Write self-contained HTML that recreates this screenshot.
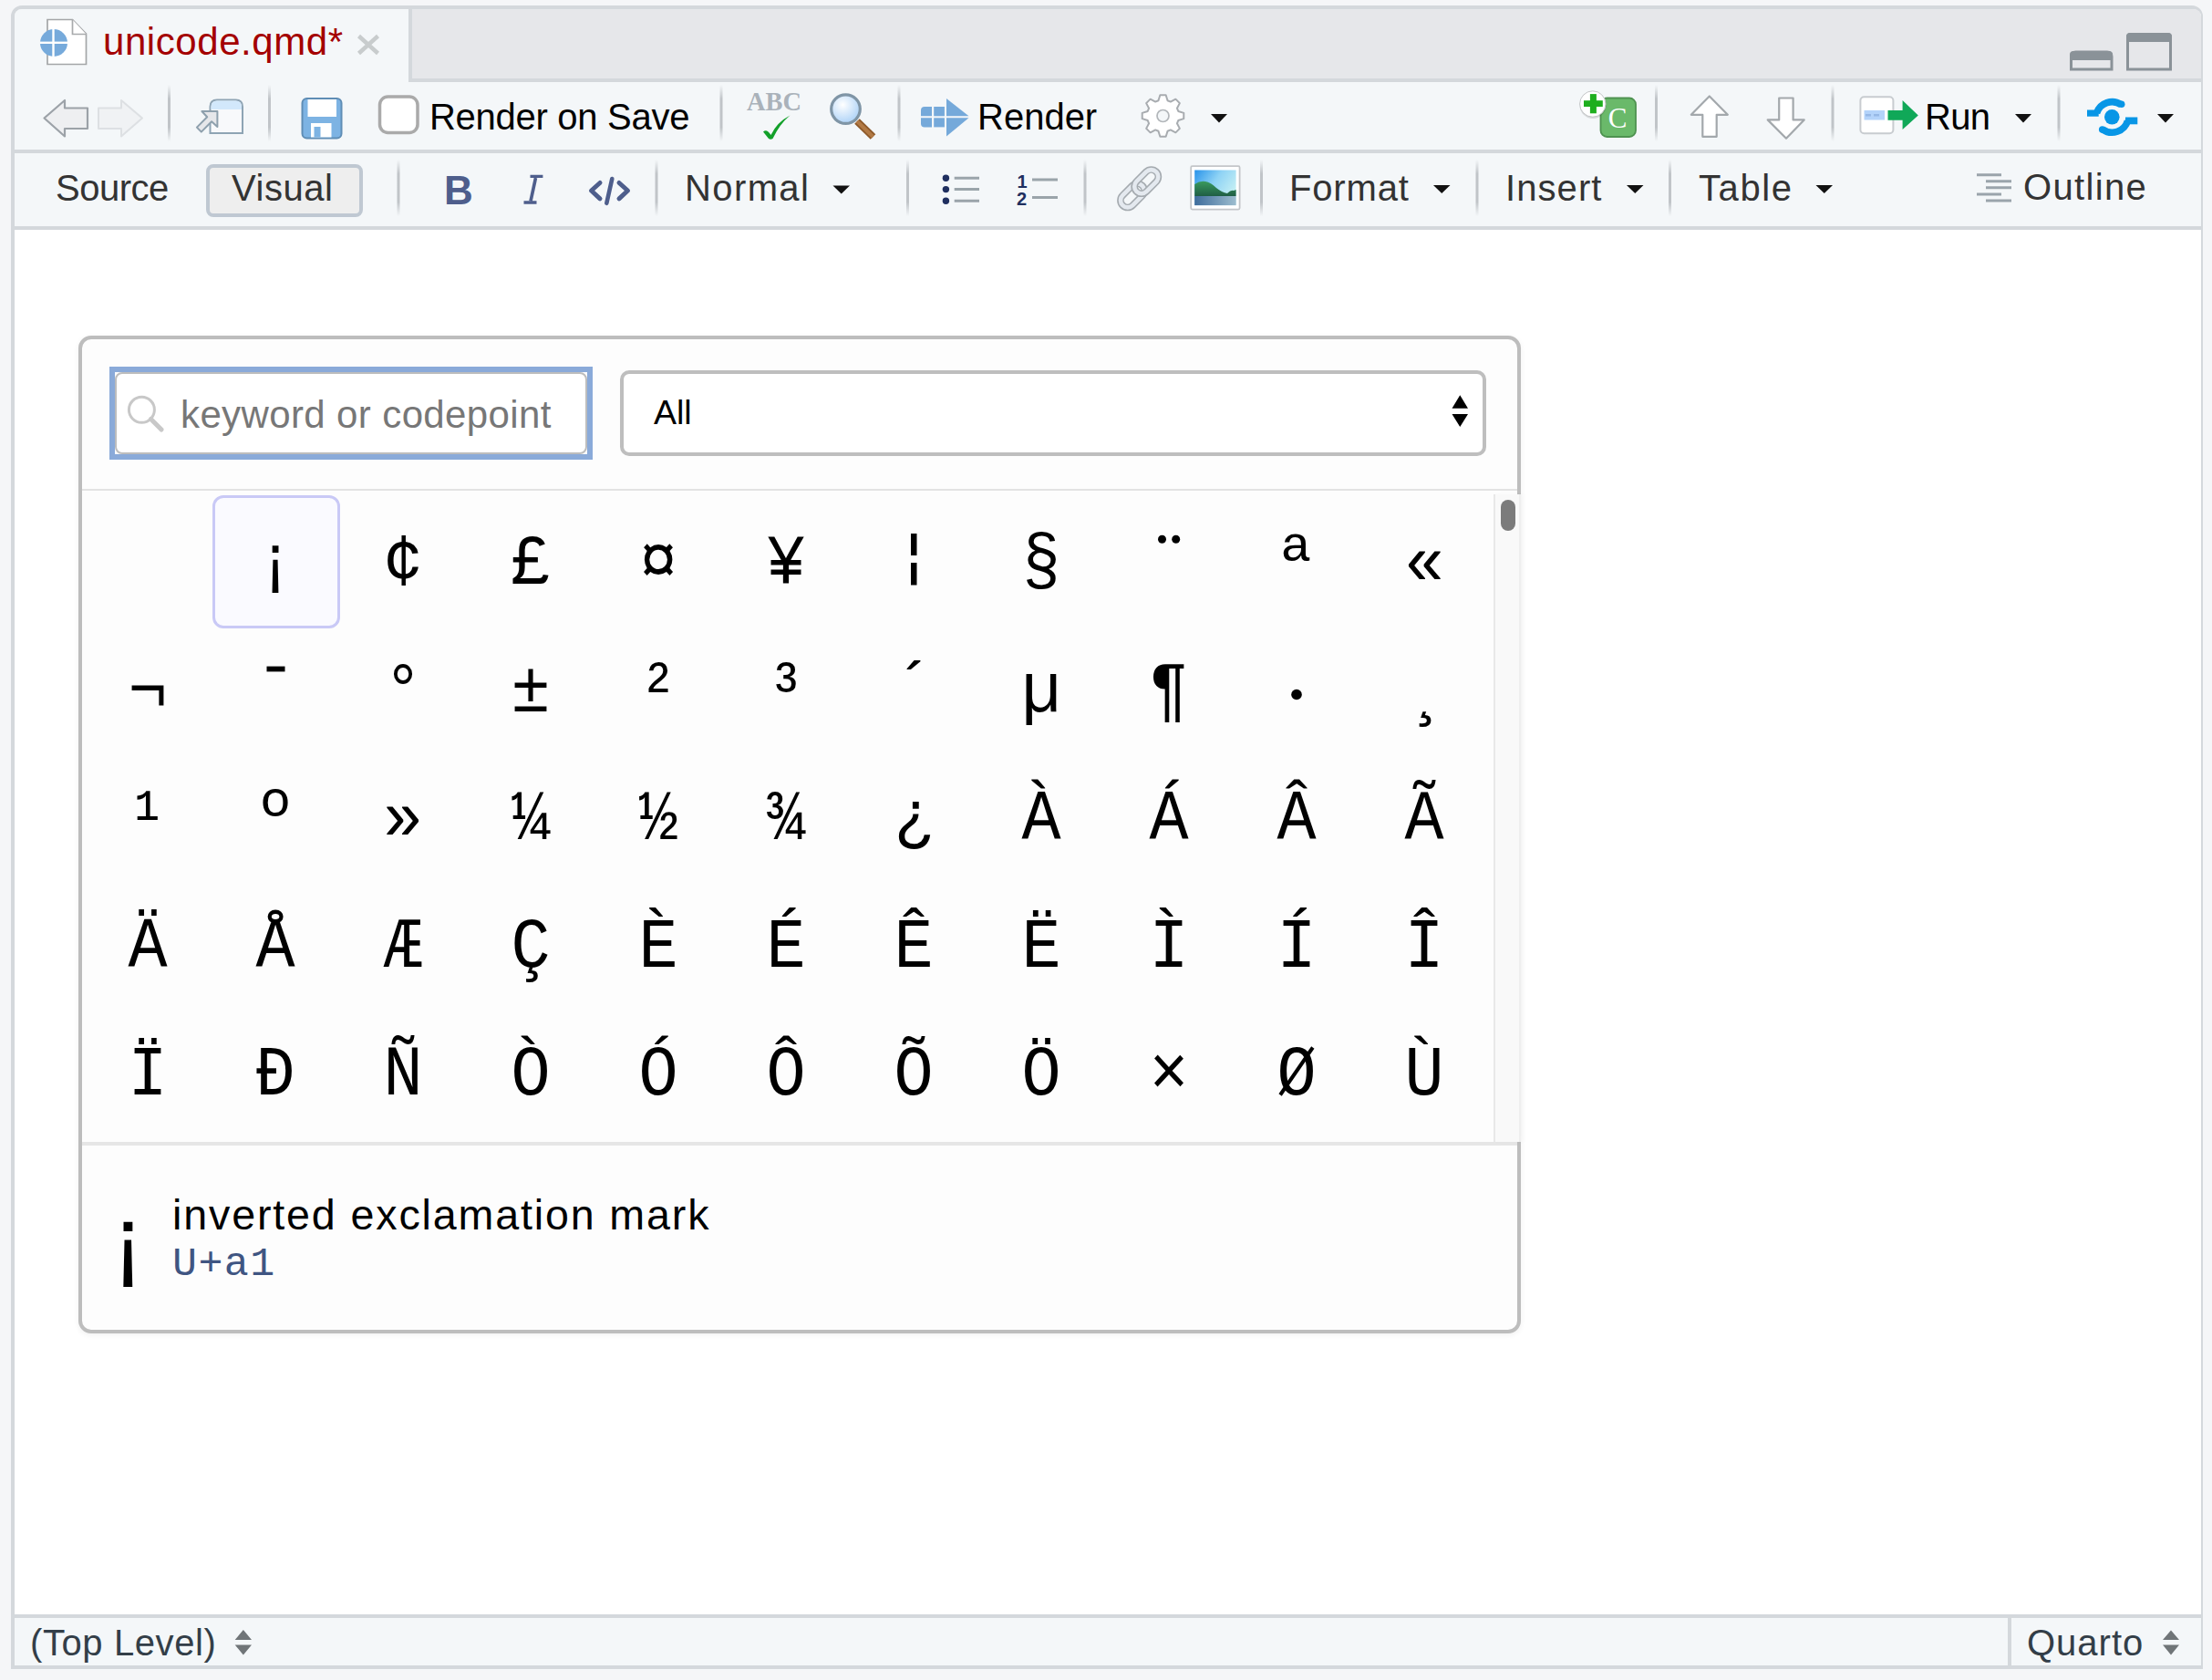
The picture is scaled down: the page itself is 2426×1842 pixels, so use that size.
<!DOCTYPE html>
<html><head><meta charset="utf-8">
<style>
html,body{margin:0;padding:0;}
body{width:2426px;height:1842px;position:relative;overflow:hidden;background:#f5f6f8;font-family:"Liberation Sans",sans-serif;}
.a{position:absolute;}
.t{position:absolute;white-space:nowrap;line-height:1;}
.sep{position:absolute;width:3px;background:linear-gradient(to bottom,rgba(190,195,199,0),#c3c7cb 25%,#c3c7cb 75%,rgba(190,195,199,0));}
.sep:after{content:"";position:absolute;left:3px;top:0;bottom:0;width:3px;background:linear-gradient(to bottom,rgba(255,255,255,0),#fff 25%,#fff 75%,rgba(255,255,255,0));}
.dd{position:absolute;width:0;height:0;border-left:9px solid transparent;border-right:9px solid transparent;border-top:9px solid #111;}
.cell{position:absolute;width:140px;height:140px;font-family:"Liberation Mono",monospace;font-size:74px;color:#000;text-align:center;}
.gc{position:absolute;width:140px;text-align:center;font-family:"Liberation Mono",monospace;font-size:78px;line-height:1;color:#000;transform:scaleX(0.92);}
</style></head>
<body>
<!-- outer pane -->
<div class="a" style="left:12px;top:6px;width:2398px;height:1816px;border:4px solid #d4d8dc;border-right-width:2px;border-radius:12px 12px 0 0;background:#fff;"></div>
<!-- tab bar -->
<div class="a" style="left:16px;top:10px;width:2398px;height:76px;background:#e6e7ea;border-radius:8px 8px 0 0;"></div>
<div class="a" style="left:452px;top:86px;width:1962px;height:4px;background:#d4d8dc;"></div>
<!-- active tab -->
<div class="a" style="left:16px;top:10px;width:432px;height:80px;background:#f4f7f9;border-radius:8px 0 0 0;"></div>
<div class="a" style="left:448px;top:10px;width:4px;height:80px;background:#d4d8dc;"></div>
<!-- toolbar 1 -->
<div class="a" style="left:16px;top:90px;width:2398px;height:74px;background:#f4f7f9;"></div>
<div class="a" style="left:16px;top:164px;width:2398px;height:4px;background:#d4d8dc;"></div>
<!-- toolbar 2 -->
<div class="a" style="left:16px;top:168px;width:2398px;height:80px;background:#f4f7f9;"></div>
<div class="a" style="left:16px;top:248px;width:2398px;height:4px;background:#d4d8dc;"></div>
<!-- status bar -->
<div class="a" style="left:16px;top:1770px;width:2398px;height:4px;background:#d4d8dc;"></div>
<div class="a" style="left:16px;top:1774px;width:2398px;height:52px;background:#f4f7f9;"></div>
<div class="a" style="left:2202px;top:1774px;width:4px;height:52px;background:#d4d8dc;"></div>


<svg class="a" style="left:0;top:0" width="2426" height="1842" viewBox="0 0 2426 1842">
<defs>
<linearGradient id="sepg" x1="0" y1="0" x2="0" y2="1"><stop offset="0" stop-color="#c0c4c8" stop-opacity="0"/><stop offset="0.25" stop-color="#c0c4c8"/><stop offset="0.75" stop-color="#c0c4c8"/><stop offset="1" stop-color="#c0c4c8" stop-opacity="0"/></linearGradient>
<linearGradient id="sky" x1="0" y1="0" x2="1" y2="0.6"><stop offset="0" stop-color="#2893ea"/><stop offset="0.5" stop-color="#8fd3f5"/><stop offset="1" stop-color="#c8f1f4"/></linearGradient>
<linearGradient id="water" x1="0" y1="0" x2="1" y2="0"><stop offset="0" stop-color="#3f6d9c"/><stop offset="1" stop-color="#9dbdcf"/></linearGradient>
<linearGradient id="hill" x1="0" y1="0" x2="0" y2="1"><stop offset="0" stop-color="#3a9a5e"/><stop offset="1" stop-color="#1f5e45"/></linearGradient>
<radialGradient id="lens" cx="0.4" cy="0.35" r="0.7"><stop offset="0" stop-color="#ffffff"/><stop offset="1" stop-color="#a9d0f7"/></radialGradient>
</defs>

<!-- file icon in tab -->
<path d="M52,21.5 L79.5,21.5 L94.5,37 L94.5,70.5 L52,70.5 Z" fill="#fff" stroke="#a4a6a8" stroke-width="1.7"/>
<path d="M79.5,21.5 L79.5,37.5 L94.5,37.5" fill="#fff" stroke="#a8aaac" stroke-width="1.7"/>
<circle cx="59" cy="47" r="15" fill="#76aadb"/>
<rect x="57.3" y="32" width="2.4" height="30" fill="#fff"/>
<rect x="44" y="45.6" width="30" height="2.4" fill="#fff"/>
<!-- close x -->
<path d="M393.5,39.5 L414.5,58.5 M414.5,39.5 L393.5,58.5" stroke="#c8cccd" stroke-width="4.5"/>
<!-- minimize / maximize -->
<path d="M2271.5,76 L2271.5,62 Q2271.5,57 2276.5,57 L2311,57 Q2316,57 2316,62 L2316,76 Z" fill="none" stroke="#8a9298" stroke-width="3"/>
<rect x="2270" y="56" width="47" height="10" rx="4" fill="#8a9298"/>
<rect x="2270" y="62" width="47" height="4" fill="#8a9298"/>
<path d="M2333.5,76 L2333.5,41 Q2333.5,37.5 2337,37.5 L2377,37.5 Q2380.5,37.5 2380.5,41 L2380.5,76 Z" fill="none" stroke="#8a9298" stroke-width="3"/>
<rect x="2332" y="36" width="50" height="10" rx="4" fill="#8a9298"/>
<rect x="2332" y="41" width="50" height="5" fill="#8a9298"/>

<!-- separators toolbar1 -->
<g fill="url(#sepg)">
<rect x="184" y="93" width="3" height="62"/><rect x="294" y="93" width="3" height="62"/><rect x="789.5" y="93" width="3" height="62"/><rect x="984.5" y="93" width="3" height="62"/><rect x="1815" y="93" width="3" height="62"/><rect x="2008.5" y="93" width="3" height="62"/><rect x="2256.5" y="93" width="3" height="62"/>
<rect x="435.5" y="175" width="3" height="62"/><rect x="718.5" y="175" width="3" height="62"/><rect x="994" y="175" width="3" height="62"/><rect x="1188.5" y="175" width="3" height="62"/><rect x="1382" y="175" width="3" height="62"/><rect x="1618.5" y="175" width="3" height="62"/><rect x="1830" y="175" width="3" height="62"/>
</g>

<!-- back / forward -->
<path d="M48.5,129.5 L71,110 L71,118.5 L96,118.5 L96,141 L71,141 L71,149.5 Z" fill="#eeeff1" stroke="#9ca2a8" stroke-width="2.2" stroke-linejoin="round"/>
<path d="M156,129.5 L133,110 L133,118.5 L108,118.5 L108,141 L133,141 L133,149.5 Z" fill="#f0f2f4" stroke="#dde0e3" stroke-width="2" stroke-linejoin="round"/>
<!-- popout -->
<path d="M230.5,146 L230.5,117 Q230.5,109.5 238,109.5 L258.5,109.5 Q266,109.5 266,117 L266,146 Z" fill="#f8f9fb" stroke="#8ea4b4" stroke-width="2"/>
<path d="M231.5,120 L231.5,117 Q231.5,110.5 238,110.5 L258.5,110.5 Q265,110.5 265,117 L265,120 Z" fill="#d2e8fb"/>
<path d="M238.4,122 L221.4,122 L227.2,128.3 L215.9,139.6 L220.8,144.6 L232.1,133.2 L238.4,139 Z" fill="#e6e7ea" stroke="#8ea0ad" stroke-width="2" stroke-linejoin="round"/>
<!-- save -->
<rect x="331.5" y="108" width="43" height="43.5" rx="5" fill="#7db3e3" stroke="#5f8db5" stroke-width="2"/>
<rect x="337.5" y="109" width="31.5" height="19" fill="#fff"/>
<rect x="341" y="135" width="22.5" height="15.5" fill="#fff"/>
<rect x="344.5" y="139" width="7" height="11.5" fill="#7db3e3"/>
<!-- checkbox -->
<rect x="416.5" y="106" width="41.5" height="39.5" rx="9" fill="#fff" stroke="#aaaaaa" stroke-width="3.5"/>
<!-- ABC -->
<text x="819" y="120.5" font-family="Liberation Serif" font-weight="bold" font-size="29" fill="#aab2ba" textLength="60" lengthAdjust="spacingAndGlyphs">ABC</text>
<path d="M837,144.5 Q841,141 845.5,148 Q852,134 866.5,126.5 Q855,136 847.5,152 Q845,153.5 843,152 Z" fill="#12a02a"/>
<!-- magnifier -->
<path d="M940,133 L957.5,150" stroke="#8e5a2a" stroke-width="8" stroke-linecap="butt"/>
<path d="M940,133 L957.5,150" stroke="#b27a45" stroke-width="4" stroke-linecap="butt"/>
<circle cx="927.5" cy="119.6" r="15.8" fill="url(#lens)" stroke="#7f95a6" stroke-width="3.2"/>
<!-- render icon -->
<g fill="#75a9da">
<path d="M1010,121 Q1010,117 1014,117 L1022,117 L1022,127.3 L1010,127.3 Z"/>
<rect x="1024.2" y="117" width="11.7" height="10.3"/>
<path d="M1010,129.3 L1022,129.3 L1022,139.4 L1014,139.4 Q1010,139.4 1010,135.4 Z"/>
<rect x="1024.2" y="129.3" width="11.7" height="10.1"/>
<path d="M1038,108 L1062.5,127.3 L1038,127.3 Z"/>
<path d="M1038,129.3 L1062.5,129.3 L1038,149.5 Z"/>
</g>
<!-- gear -->
<g transform="translate(1275.5,127)">
<path id="gearp" d="M-5.04,-16.76 L-3.17,-22.78 L3.17,-22.78 L5.04,-16.76 L8.29,-15.41 L13.87,-18.35 L18.35,-13.87 L15.41,-8.29 L16.76,-5.04 L22.78,-3.17 L22.78,3.17 L16.76,5.04 L15.41,8.29 L18.35,13.87 L13.87,18.35 L8.29,15.41 L5.04,16.76 L3.17,22.78 L-3.17,22.78 L-5.04,16.76 L-8.29,15.41 L-13.87,18.35 L-18.35,13.87 L-15.41,8.29 L-16.76,5.04 L-22.78,3.17 L-22.78,-3.17 L-16.76,-5.04 L-15.41,-8.29 L-18.35,-13.87 L-13.87,-18.35 L-8.29,-15.41 Z" stroke-linejoin="round" fill="#fff" stroke="#a8acb0" stroke-width="2"/>
<circle r="6.5" fill="#f4f7f9" stroke="#b2b6ba" stroke-width="1.7"/>
</g>
<!-- dropdown triangles -->
<g fill="#111">
<path d="M1328,125 L1346,125 L1337,134.5 Z"/>
<path d="M2210,125 L2228,125 L2219,134.5 Z"/>
<path d="M2366,125 L2384,125 L2375,134.5 Z"/>
<path d="M913.5,203.5 L932,203.5 L922.75,212.5 Z"/>
<path d="M1572,203 L1590.5,203 L1581.25,212 Z"/>
<path d="M1784,203 L1802.5,203 L1793.25,212 Z"/>
<path d="M1991.5,203 L2010,203 L2000.75,212 Z"/>
</g>
<!-- plus C -->
<rect x="1755.5" y="107.5" width="38.5" height="42.5" rx="7" fill="#6ab96a" stroke="#4e9250" stroke-width="1.8"/>
<text x="1774" y="140" font-family="Liberation Serif" font-size="31" fill="#fff" text-anchor="middle">C</text>
<circle cx="1747" cy="115.5" r="14.5" fill="#000" opacity="0.12"/>
<circle cx="1746.8" cy="114" r="14.2" fill="#fff" stroke="#c4c6c8" stroke-width="1"/>
<rect x="1743.9" y="103.1" width="7" height="21.2" fill="#1eae1e"/>
<rect x="1737" y="110.2" width="20.8" height="6.8" fill="#1eae1e"/>
<!-- up / down arrows -->
<path d="M1874.8,105.5 L1854.8,125.8 L1867.3,125.8 L1867.3,149.8 L1882.7,149.8 L1882.7,125.8 L1894.8,125.8 Z" fill="#fff" stroke="#a3a8ac" stroke-width="2.2" stroke-linejoin="round"/>
<path d="M1959,151.7 L1938.7,131.4 L1951.2,131.4 L1951.2,107.5 L1966.6,107.5 L1966.6,131.4 L1978.7,131.4 Z" fill="#fff" stroke="#a3a8ac" stroke-width="2.2" stroke-linejoin="round"/>
<!-- run icon -->
<rect x="2040.4" y="106.2" width="36" height="40" rx="4" fill="#fff" stroke="#c8ccd0" stroke-width="2"/>
<rect x="2044.5" y="121" width="22.5" height="10.5" fill="#b3d3fa"/>
<rect x="2046" y="125" width="6" height="2.5" fill="#97b9e6"/><rect x="2055" y="125" width="6" height="2.5" fill="#97b9e6"/>
<path d="M2070.5,121 L2086.6,121 L2086.6,110.1 L2103.8,126.4 L2086.6,142 L2086.6,131.8 L2070.5,131.8 Z" fill="#10a858"/>
<!-- publish -->
<g fill="none" stroke="#0896e6" stroke-width="7.6">
<path d="M2326.5,114.8 A17.8 17.8 0 0 0 2299.5,124"/>
<path d="M2306,141.8 A17.8 17.8 0 0 0 2333.5,132.5"/>
</g>
<circle cx="2316.3" cy="128.3" r="8.3" fill="#0896e6"/>
<circle cx="2326.7" cy="114.3" r="3.8" fill="#0896e6"/>
<circle cx="2305.7" cy="142" r="3.8" fill="#0896e6"/>
<rect x="2289" y="120.5" width="12.7" height="7.2" fill="#0896e6"/>
<rect x="2331" y="128.5" width="13.3" height="7.8" fill="#0896e6"/>

<!-- TOOLBAR 2 icons -->
<text x="487" y="223.5" font-family="Liberation Sans" font-weight="bold" font-size="44" fill="#4e5e8c">B</text>
<g stroke="#4e5e8c" fill="none">
<path d="M581.5,193.4 L595.4,193.4 M574.5,222 L588.5,222" stroke-width="3.3"/>
<path d="M587.5,195 L582,220.5" stroke-width="3.6"/>
<path d="M658,200.5 L648.5,209 L658,217.8 M679,200.5 L688.5,209 L679,217.8" stroke-width="5" stroke-linecap="round" stroke-linejoin="round"/>
<path d="M671.3,196 L665.3,222.8" stroke-width="4.6" stroke-linecap="round"/>
</g>
<!-- bullet list -->
<g fill="#1f2f5f"><circle cx="1037.4" cy="195.3" r="3.7"/><circle cx="1037.4" cy="207.6" r="3.7"/><circle cx="1037.4" cy="220.3" r="3.7"/></g>
<g stroke="#9aa4aa" stroke-width="3"><path d="M1046.7,195.3 L1074,195.3 M1046.7,207.6 L1074,207.6 M1046.7,220.3 L1074,220.3"/></g>
<!-- numbered -->
<text x="1115.5" y="205.5" font-family="Liberation Sans" font-weight="bold" font-size="20" fill="#1f2f5f">1</text>
<text x="1115" y="225.3" font-family="Liberation Sans" font-weight="bold" font-size="20" fill="#1f2f5f">2</text>
<g stroke="#9aa4aa" stroke-width="3"><path d="M1132,197 L1160,197 M1132,216.6 L1160,216.6"/></g>
<!-- link -->
<g transform="translate(1249.65,206.75) rotate(-45)">
<rect x="-26" y="-7.75" width="30.5" height="15.5" rx="7.75" fill="none" stroke="#a5abb0" stroke-width="7.8"/>
<rect x="-26" y="-7.75" width="30.5" height="15.5" rx="7.75" fill="none" stroke="#e4e9ef" stroke-width="4.6"/>
<rect x="-4.5" y="-7.75" width="30.5" height="15.5" rx="7.75" fill="none" stroke="#a5abb0" stroke-width="7.8"/>
<rect x="-4.5" y="-7.75" width="30.5" height="15.5" rx="7.75" fill="none" stroke="#e4e9ef" stroke-width="4.6"/>
</g>
<!-- image icon -->
<rect x="1306.2" y="182.2" width="53.4" height="47.4" rx="1.5" fill="#fff" stroke="#c3c6c9" stroke-width="1.8"/>
<rect x="1310.2" y="186.5" width="45.4" height="38.6" fill="url(#sky)"/>
<path d="M1310.2,202 Q1316,198 1322,199 Q1328,200 1334,206 Q1340,211 1346,212 Q1350,208 1353,209 L1355.6,208 L1355.6,215 L1310.2,215 Z" fill="url(#hill)"/>
<rect x="1310.2" y="215" width="45.4" height="10.1" fill="url(#water)"/>
<!-- outline icon -->
<g stroke="#9aa4ab" stroke-width="3"><path d="M2168,191.7 L2195,191.7 M2178,198.8 L2206,198.8 M2178,205.8 L2206,205.8 M2168,213 L2195,213 M2178,220 L2206,220"/></g>

</svg>

<!-- TAB CONTENT -->
<div class="t" style="left:113px;top:25px;font-size:42px;letter-spacing:0.57px;color:#a40000;">unicode.qmd*</div>

<!-- TOOLBAR 1 TEXT -->
<div class="t" style="left:471px;top:108px;font-size:40px;letter-spacing:-0.28px;color:#000;">Render on Save</div>
<div class="t" style="left:1072px;top:108px;font-size:40px;color:#000;">Render</div>
<div class="t" style="left:2111px;top:108px;font-size:40px;letter-spacing:-0.7px;color:#000;">Run</div>

<!-- TOOLBAR 2 TEXT -->
<div class="t" style="left:61px;top:186px;font-size:40px;letter-spacing:-0.5px;color:#333;">Source</div>
<div class="a" style="left:226px;top:180px;width:164px;height:50px;border:4px solid #bfc8d2;border-radius:8px;background:#eeeeee;"></div>
<div class="t" style="left:254px;top:186px;font-size:40px;letter-spacing:0.54px;color:#333;">Visual</div>
<div class="t" style="left:751px;top:186px;font-size:40px;letter-spacing:1.4px;color:#333;">Normal</div>
<div class="t" style="left:1414px;top:186px;font-size:40px;letter-spacing:0.84px;color:#333;">Format</div>
<div class="t" style="left:1651px;top:186px;font-size:40px;letter-spacing:1.08px;color:#333;">Insert</div>
<div class="t" style="left:1863px;top:186px;font-size:40px;letter-spacing:1.6px;color:#333;">Table</div>
<div class="t" style="left:2219px;top:185px;font-size:40px;letter-spacing:1.33px;color:#333;">Outline</div>

<!-- STATUS -->
<div class="t" style="left:33px;top:1781px;font-size:40px;letter-spacing:0.6px;color:#333e48;">(Top Level)</div>
<div class="t" style="left:2223px;top:1781px;font-size:40px;letter-spacing:1px;color:#333e48;">Quarto</div>

<!-- DIALOG -->
<div class="a" style="left:86px;top:368px;width:1574px;height:1086px;border:4px solid #bdbdbd;border-radius:14px;background:#fdfdfd;box-shadow:0 2px 6px rgba(0,0,0,0.06);"></div>
<!-- search -->
<div class="a" style="left:120px;top:402px;width:518px;height:90px;border:6px solid #8aaad9;"></div>
<div class="a" style="left:126px;top:408px;width:518px;height:90px;border:2px solid #bdbdbd;border-radius:8px;background:#fff;box-sizing:border-box;"></div>
<div class="t" style="left:198px;top:434px;font-size:42px;letter-spacing:0.38px;color:#777;">keyword or codepoint</div>
<!-- select -->
<div class="a" style="left:680px;top:406px;width:942px;height:86px;border:4px solid #bebebe;border-radius:10px;background:#fff;"></div>
<div class="t" style="left:717px;top:434px;font-size:37.5px;color:#000;">All</div>
<div class="dividers"></div>
<div class="a" style="left:90px;top:536px;width:1574px;height:2px;background:#e3e3e3;"></div>
<div class="a" style="left:90px;top:1252px;width:1574px;height:4px;background:#e6e6e6;"></div>
<!-- scrollbar -->
<div class="a" style="left:1638px;top:542px;width:30px;height:710px;background:#f9f9f9;border-left:2px solid #e8e8e8;border-right:2px solid #efefef;box-sizing:border-box;box-shadow:3px 0 5px rgba(0,0,0,0.025);"></div>
<div class="a" style="left:1646px;top:548px;width:16px;height:34px;background:#7b7b7b;border-radius:8px;"></div>
<!-- selected cell -->
<div class="a" style="left:233px;top:543px;width:134px;height:140px;border:3px solid #c9c9f6;border-radius:12px;background:#fafaff;"></div>

<div id="grid">
<div class="gc" style="left:92px;top:579.7px"> </div>
<div class="gc" style="left:232px;top:579.7px">¡</div>
<div class="gc" style="left:372px;top:579.7px">¢</div>
<div class="gc" style="left:512px;top:579.7px">£</div>
<div class="gc" style="left:652px;top:579.7px">¤</div>
<div class="gc" style="left:792px;top:579.7px">¥</div>
<div class="gc" style="left:932px;top:579.7px"></div>
<div class="gc" style="left:1072px;top:579.7px">§</div>
<div class="gc" style="left:1212px;top:579.7px"></div>
<div class="gc" style="left:1352px;top:579.7px">ª</div>
<div class="gc" style="left:1492px;top:579.7px">«</div>
<div class="gc" style="left:92px;top:719.7px">¬</div>
<div class="gc" style="left:232px;top:719.7px"></div>
<div class="gc" style="left:372px;top:719.7px">°</div>
<div class="gc" style="left:512px;top:719.7px">±</div>
<div class="gc" style="left:652px;top:719.7px">²</div>
<div class="gc" style="left:792px;top:719.7px">³</div>
<div class="gc" style="left:932px;top:719.7px">´</div>
<div class="gc" style="left:1072px;top:719.7px">µ</div>
<div class="gc" style="left:1212px;top:719.7px">¶</div>
<div class="gc" style="left:1352px;top:719.7px"></div>
<div class="gc" style="left:1504px;top:719.7px">¸</div>
<div class="gc" style="left:92px;top:859.7px">¹</div>
<div class="gc" style="left:232px;top:859.7px">º</div>
<div class="gc" style="left:372px;top:859.7px">»</div>
<div class="gc" style="left:512px;top:859.7px">¼</div>
<div class="gc" style="left:652px;top:859.7px">½</div>
<div class="gc" style="left:792px;top:859.7px">¾</div>
<div class="gc" style="left:932px;top:859.7px">¿</div>
<div class="gc" style="left:1072px;top:859.7px">À</div>
<div class="gc" style="left:1212px;top:859.7px">Á</div>
<div class="gc" style="left:1352px;top:859.7px">Â</div>
<div class="gc" style="left:1492px;top:859.7px">Ã</div>
<div class="gc" style="left:92px;top:999.7px">Ä</div>
<div class="gc" style="left:232px;top:999.7px">Å</div>
<div class="gc" style="left:372px;top:999.7px">Æ</div>
<div class="gc" style="left:512px;top:999.7px">Ç</div>
<div class="gc" style="left:652px;top:999.7px">È</div>
<div class="gc" style="left:792px;top:999.7px">É</div>
<div class="gc" style="left:932px;top:999.7px">Ê</div>
<div class="gc" style="left:1072px;top:999.7px">Ë</div>
<div class="gc" style="left:1212px;top:999.7px">Ì</div>
<div class="gc" style="left:1352px;top:999.7px">Í</div>
<div class="gc" style="left:1492px;top:999.7px">Î</div>
<div class="gc" style="left:92px;top:1139.7px">Ï</div>
<div class="gc" style="left:232px;top:1139.7px">Ð</div>
<div class="gc" style="left:372px;top:1139.7px">Ñ</div>
<div class="gc" style="left:512px;top:1139.7px">Ò</div>
<div class="gc" style="left:652px;top:1139.7px">Ó</div>
<div class="gc" style="left:792px;top:1139.7px">Ô</div>
<div class="gc" style="left:932px;top:1139.7px">Õ</div>
<div class="gc" style="left:1072px;top:1139.7px">Ö</div>
<div class="gc" style="left:1212px;top:1139.7px">×</div>
<div class="gc" style="left:1352px;top:1139.7px">Ø</div>
<div class="gc" style="left:1492px;top:1139.7px">Ù</div>
</div>

<!-- preview -->
<div class="t" style="left:123px;top:1306px;font-size:104px;color:#000;">¡</div>
<div class="t" style="left:189px;top:1309px;font-size:46.6px;letter-spacing:1.86px;color:#000;">inverted exclamation mark</div>
<div class="t" style="left:189px;top:1364px;font-size:45px;letter-spacing:1.4px;color:#3f5582;font-family:'Liberation Mono',monospace;">U+a1</div>

<svg class="a" style="left:0;top:0" width="2426" height="1842" viewBox="0 0 2426 1842">
<!-- search magnifier -->
<circle cx="155.4" cy="449.3" r="14" fill="none" stroke="#c8c8c8" stroke-width="3"/>
<path d="M165.5,459.5 L177,471" stroke="#c8c8c8" stroke-width="5.2" stroke-linecap="round"/>
<!-- select arrows -->
<path d="M1592.5,447.7 L1610,447.7 L1601.25,433.3 Z M1592.5,454 L1610,454 L1601.25,468 Z" fill="#000"/>
<!-- status arrows -->
<path d="M257.7,1798 L276,1798 L266.85,1787 Z M257.7,1803.5 L276,1803.5 L266.85,1814.5 Z" fill="#707578"/>
<path d="M2372,1798 L2390,1798 L2381,1787.5 Z M2372,1803.5 L2390,1803.5 L2381,1814.6 Z" fill="#707578"/>
<rect x="292.5" y="730.6" width="20" height="5.8" fill="#000"/>
<circle cx="1422" cy="761.5" r="5.8" fill="#000"/><circle cx="1274.5" cy="591.3" r="4.5" fill="#000"/><circle cx="1289.7" cy="591.3" r="4.5" fill="#000"/>
<rect x="999" y="585" width="6.5" height="24" fill="#000"/><rect x="999" y="617" width="6.5" height="24.5" fill="#000"/>
</svg>
</body></html>
